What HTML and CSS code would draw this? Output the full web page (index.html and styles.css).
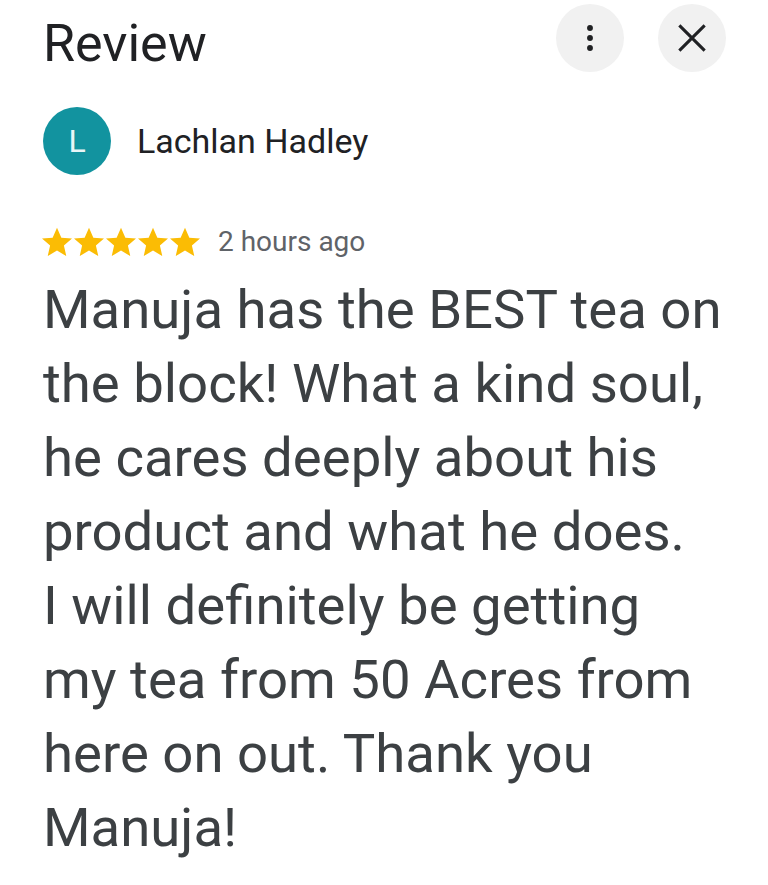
FILE: index.html
```html
<!DOCTYPE html>
<html lang="en">
<head>
    <meta charset="UTF-8">
    <meta name="viewport" content="width=device-width, initial-scale=1.0">
    <link rel="stylesheet" href="styles.css">
    <title>Review</title>
</head>
<body>

<div class="review-sheet">
    <div class="sheet-header">
        <h1 class="title">Review</h1>
        <div class="header-actions">
            <button class="round-button" aria-label="More options">
                <svg viewBox="0 0 24 24"><circle cx="12" cy="4.5" r="2.2"/><circle cx="12" cy="12" r="2.2"/><circle cx="12" cy="19.5" r="2.2"/></svg>
            </button>
            <button class="round-button" aria-label="Close">
                <svg viewBox="0 0 24 24"><path d="M2.5 2.5l19 19M21.5 2.5l-19 19" stroke="#202124" stroke-width="2.3" fill="none"/></svg>
            </button>
        </div>
    </div>

    <div class="author">
        <div class="avatar">L</div>
        <div class="author-name">Lachlan Hadley</div>
    </div>

    <div class="rating">
        <div class="stars">
            <svg viewBox="2 2 20 20"><path d="M12 2.5l2.9 6.6 7.1.6-5.4 4.7 1.6 7-6.2-3.7-6.2 3.7 1.6-7L2 9.7l7.1-.6z"/></svg>
            <svg viewBox="2 2 20 20"><path d="M12 2.5l2.9 6.6 7.1.6-5.4 4.7 1.6 7-6.2-3.7-6.2 3.7 1.6-7L2 9.7l7.1-.6z"/></svg>
            <svg viewBox="2 2 20 20"><path d="M12 2.5l2.9 6.6 7.1.6-5.4 4.7 1.6 7-6.2-3.7-6.2 3.7 1.6-7L2 9.7l7.1-.6z"/></svg>
            <svg viewBox="2 2 20 20"><path d="M12 2.5l2.9 6.6 7.1.6-5.4 4.7 1.6 7-6.2-3.7-6.2 3.7 1.6-7L2 9.7l7.1-.6z"/></svg>
            <svg viewBox="2 2 20 20"><path d="M12 2.5l2.9 6.6 7.1.6-5.4 4.7 1.6 7-6.2-3.7-6.2 3.7 1.6-7L2 9.7l7.1-.6z"/></svg>
        </div>
        <span class="time">2 hours ago</span>
    </div>

    <p class="review-text">Manuja has the BEST tea on the block! What a kind soul, he cares deeply about his product and what he does.<br>I will definitely be getting my tea from 50 Acres from here on out. Thank you Manuja!</p>
</div>

</body>
</html>
```

FILE: styles.css
```css
body {
    margin: 0;
    background: #ffffff;
    font-family: Roboto, "Noto Sans", sans-serif;
    color: #202124;
}
.review-sheet {
    padding: 4px 42px 0 43px;
}
.sheet-header {
    display: flex;
    justify-content: space-between;
    align-items: flex-start;
}
.title {
    margin: 12px 0 0;
    font-size: 52px;
    line-height: 56px;
    font-weight: 400;
    color: #202124;
}
.header-actions {
    display: flex;
    gap: 34px;
}
.round-button {
    display: flex;
    justify-content: center;
    align-items: center;
    width: 68px;
    height: 68px;
    border-radius: 50%;
    border: none;
    padding: 0;
    background-color: #f1f1f1;
    cursor: pointer;
}
.round-button svg {
    width: 32px;
    height: 32px;
    fill: #202124;
}
.author {
    display: flex;
    align-items: center;
    gap: 26px;
    margin-top: 35px;
}
.avatar {
    display: flex;
    justify-content: center;
    align-items: center;
    width: 68px;
    height: 68px;
    border-radius: 50%;
    background-color: #12939f;
    color: #e8f6f7;
    font-size: 32px;
}
.author-name {
    font-size: 34px;
    color: #202124;
}
.rating {
    display: flex;
    align-items: center;
    gap: 18px;
    margin-top: 50px;
    margin-left: -1px;
}
.stars {
    display: flex;
    gap: 2px;
}
.stars svg {
    width: 30px;
    height: 30px;
    fill: #fbbc04;
}
.time {
    font-size: 28px;
    color: #5f6368;
}
.review-text {
    margin: 14px 0 0;
    font-size: 54.5px;
    line-height: 74px;
    color: #3c4043;
}
```
